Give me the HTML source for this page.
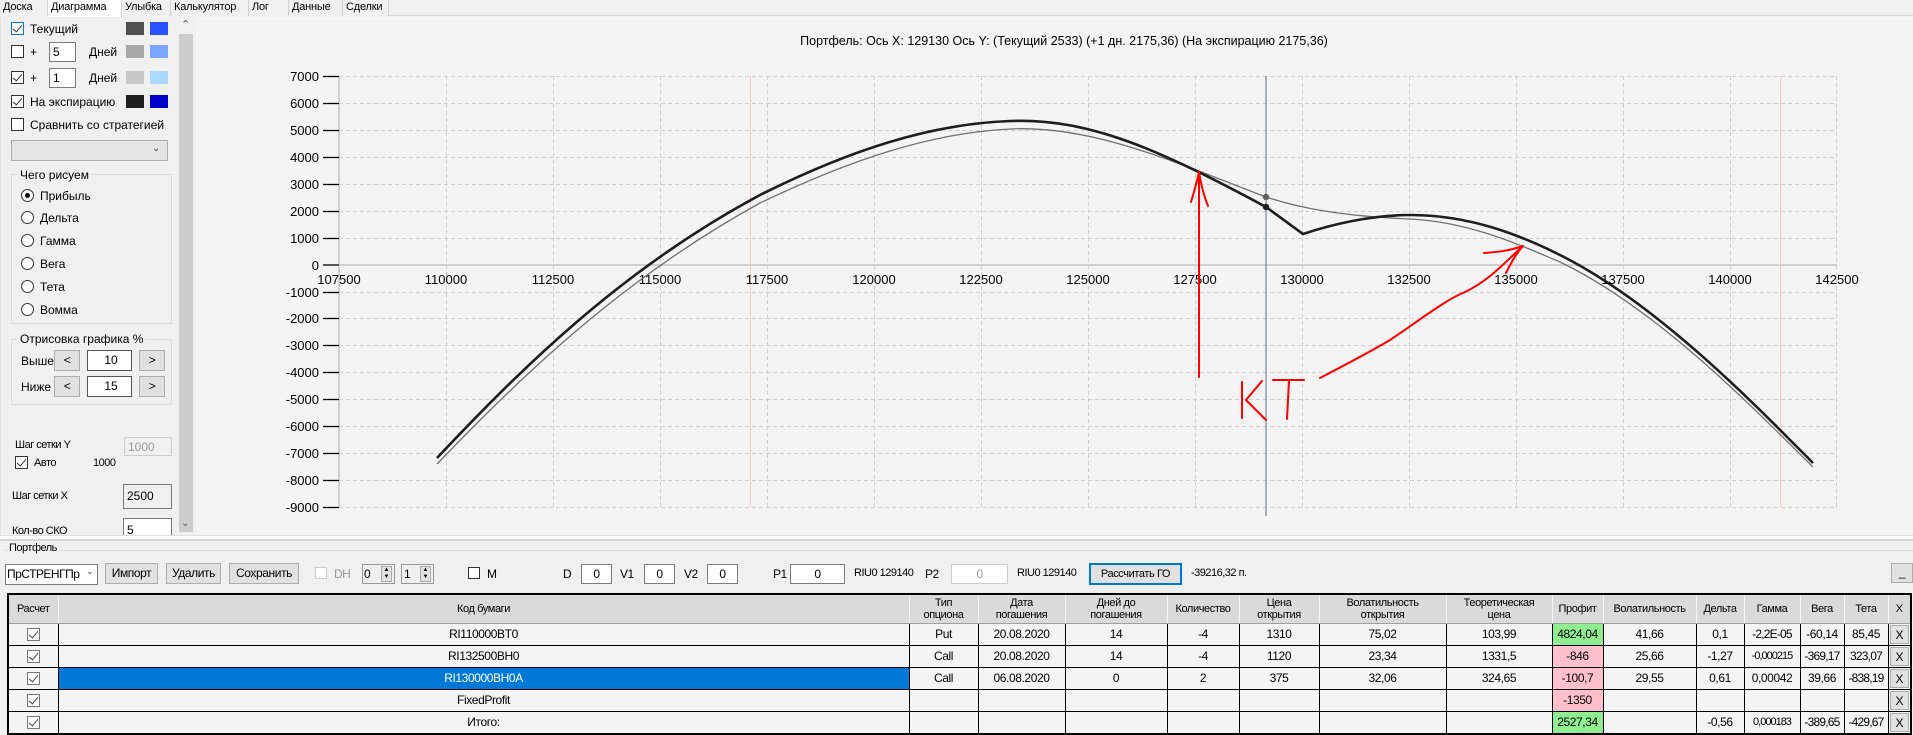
<!DOCTYPE html>
<html><head><meta charset="utf-8">
<style>
*{box-sizing:border-box;margin:0;padding:0}
body{width:1913px;height:734px;overflow:hidden;background:#f0f0f0;font-family:"Liberation Sans",sans-serif;font-size:12px;color:#000;position:relative}
.a{position:absolute;white-space:nowrap}
.tab{position:absolute;top:0;height:16px;line-height:15px;padding:0 3px;border-right:1px solid #d0d0d0;background:#f0f0f0;font-size:11px;overflow:hidden;white-space:nowrap;letter-spacing:-0.2px}
.cb{position:absolute;width:13px;height:13px;border:1px solid #333;background:#fff}
.cb.on::after{content:"";position:absolute;left:3px;top:0px;width:4px;height:8px;border:solid #333;border-width:0 1.5px 1.5px 0;transform:rotate(40deg)}
.sw{position:absolute;width:18px;height:13px}
.inp{position:absolute;background:#fff;border:1px solid #7a7a7a;padding-left:3px;line-height:18px;font-size:12px}
.rad{position:absolute;width:13px;height:13px;border:1px solid #333;border-radius:50%;background:#fff}
.grp{position:absolute;border:1px solid #dcdcdc}
.btn{position:absolute;background:#e1e1e1;border:1px solid #adadad;text-align:center;font-size:12px;letter-spacing:-0.4px;white-space:nowrap}
.n{font-size:12px;letter-spacing:-0.5px}
table{position:absolute;left:7px;top:593px;border-collapse:collapse;table-layout:fixed;width:1903px;font-size:12px;letter-spacing:-0.4px;border:2px solid #000}
th{background:#dadada;font-weight:normal;height:29px;line-height:12px;border-right:1px solid #f4f4f4;border-bottom:1px solid #a0a0a0;font-size:11px;overflow:hidden;white-space:nowrap}
td{height:22px;background:#f4f4f4;border:1px solid #000;text-align:center;padding:0;overflow:hidden;white-space:nowrap}
td.g{background:#90ee90}td.p{background:#ffc0cb}td.s{background:#0078d7;color:#fff}
.ck{display:inline-block;width:13px;height:13px;border:1px solid #777;background:#fff;position:relative;vertical-align:middle}
.ck::after{content:"";position:absolute;left:3px;top:0;width:4px;height:8px;border:solid #444;border-width:0 1px 1px 0;transform:rotate(40deg)}
.xb{display:block;margin:1px;height:19px;line-height:19px;background:#e1e1e1;border:1px solid #adadad;font-size:12px}
</style></head><body>
<div style="position:absolute;left:0;top:0;width:1913px;height:16px;background:#f0f0f0;border-bottom:1px solid #dadada"></div>
<div class="tab" style="left:0;width:48px">Доска</div>
<div class="tab" style="left:48px;width:74px;background:#fff;height:18px">Диаграмма</div>
<div class="tab" style="left:122px;width:49px">Улыбка</div>
<div class="tab" style="left:171px;width:78px">Калькулятор</div>
<div class="tab" style="left:249px;width:40px">Лог</div>
<div class="tab" style="left:289px;width:54px">Данные</div>
<div class="tab" style="left:343px;width:46px">Сделки</div>
<div style="position:absolute;left:196px;top:17px;width:1717px;height:518px;background:#f4f4f4"></div>
<div style="position:absolute;left:0;top:535px;width:1913px;height:6px;background:#f9f9f9;border-top:1px solid #e0e0e0;border-bottom:2px solid #d4d4d4"></div>
<div style="position:absolute;left:0;top:17px;width:178px;height:518px;background:#f0f0f0;border-left:1px solid #e0e0e0;overflow:hidden"></div>
<div style="position:absolute;left:178px;top:17px;width:16px;height:518px;background:#f0f0f0"></div>
<div style="position:absolute;left:179px;top:34px;width:14px;height:498px;background:#cdcdcd"></div>
<div class="a" style="left:181px;top:18px;font-size:11px;color:#555">&#8963;</div>
<div class="a" style="left:181px;top:518px;font-size:10px;color:#555">&#8964;</div>
<div class="cb on" style="left:11px;top:22px;border-color:#0078d7"></div><div class="a" style="left:30px;top:22px">Текущий</div>
<div class="sw" style="left:126px;top:22px;background:#505050"></div><div class="sw" style="left:150px;top:22px;background:#2b50ff"></div>
<div class="cb" style="left:11px;top:45px"></div><div class="a" style="left:30px;top:45px">+</div>
<div class="inp" style="left:49px;top:42px;width:27px;height:20px">5</div><div class="a" style="left:89px;top:45px">Дней</div>
<div class="sw" style="left:126px;top:45px;background:#a8a8a8"></div><div class="sw" style="left:150px;top:45px;background:#7aa6ff"></div>
<div class="cb on" style="left:11px;top:71px"></div><div class="a" style="left:30px;top:71px">+</div>
<div class="inp" style="left:49px;top:68px;width:27px;height:20px">1</div><div class="a" style="left:89px;top:71px">Дней</div>
<div class="sw" style="left:126px;top:71px;background:#c8c8c8"></div><div class="sw" style="left:150px;top:71px;background:#aad8ff"></div>
<div class="cb on" style="left:11px;top:95px"></div><div class="a" style="left:30px;top:95px">На экспирацию</div>
<div class="sw" style="left:126px;top:95px;background:#202020"></div><div class="sw" style="left:150px;top:95px;background:#0000c8"></div>
<div class="cb" style="left:11px;top:118px"></div><div class="a" style="left:30px;top:118px">Сравнить со стратегией</div>
<div style="position:absolute;left:11px;top:140px;width:157px;height:21px;background:#e5e5e5;border:1px solid #adadad"></div>
<div class="a" style="left:152px;top:143px;font-size:10px;color:#444">&#8964;</div>
<div class="grp" style="left:11px;top:174px;width:161px;height:150px"></div>
<div class="a" style="left:18px;top:168px;background:#f0f0f0;padding:0 2px">Чего рисуем</div>
<div class="rad" style="left:21px;top:189px"></div><div style="position:absolute;left:25px;top:193px;width:5px;height:5px;border-radius:50%;background:#000"></div><div class="a" style="left:40px;top:189px">Прибыль</div>
<div class="rad" style="left:21px;top:211px"></div><div class="a" style="left:40px;top:211px">Дельта</div>
<div class="rad" style="left:21px;top:234px"></div><div class="a" style="left:40px;top:234px">Гамма</div>
<div class="rad" style="left:21px;top:257px"></div><div class="a" style="left:40px;top:257px">Вега</div>
<div class="rad" style="left:21px;top:280px"></div><div class="a" style="left:40px;top:280px">Тета</div>
<div class="rad" style="left:21px;top:303px"></div><div class="a" style="left:40px;top:303px">Вомма</div>
<div class="grp" style="left:11px;top:339px;width:161px;height:66px"></div>
<div class="a" style="left:18px;top:332px;background:#f0f0f0;padding:0 2px">Отрисовка графика %</div>
<div class="a" style="left:21px;top:354px">Выше</div>
<div class="btn" style="left:54px;top:350px;width:26px;height:21px;line-height:19px">&lt;</div>
<div class="inp" style="left:87px;top:350px;width:45px;height:21px;text-align:center;border-color:#555">10</div>
<div class="btn" style="left:139px;top:350px;width:26px;height:21px;line-height:19px">&gt;</div>
<div class="a" style="left:21px;top:380px">Ниже</div>
<div class="btn" style="left:54px;top:376px;width:26px;height:21px;line-height:19px">&lt;</div>
<div class="inp" style="left:87px;top:376px;width:45px;height:21px;text-align:center;border-color:#555">15</div>
<div class="btn" style="left:139px;top:376px;width:26px;height:21px;line-height:19px">&gt;</div>
<div class="a n" style="left:15px;top:439px;font-size:11px">Шаг сетки Y</div>
<div class="inp" style="left:124px;top:437px;width:48px;height:19px;color:#999;border-color:#ccc;background:#f0f0f0">1000</div>
<div class="cb on" style="left:15px;top:456px"></div><div class="a n" style="left:34px;top:457px;font-size:11px">Авто</div><div class="a n" style="left:93px;top:457px;font-size:11px">1000</div>
<div class="a n" style="left:12px;top:490px;font-size:11px">Шаг сетки X</div>
<div class="inp" style="left:123px;top:484px;width:49px;height:25px;background:#f0f0f0;line-height:23px">2500</div>
<div class="a n" style="left:12px;top:525px;font-size:11px">Кол-во СКО</div>
<div class="inp" style="left:123px;top:518px;width:49px;height:17px;line-height:23px;overflow:hidden;border-bottom:none">5</div>
<svg class="a" style="left:0;top:0" width="1913" height="540" xmlns="http://www.w3.org/2000/svg" font-family="Liberation Sans, sans-serif" font-size="13">
<g stroke="#cfcfcf" stroke-width="1" stroke-dasharray="4,3">
<line x1="339" y1="76.5" x2="1837" y2="76.5"/><line x1="339" y1="103.5" x2="1837" y2="103.5"/><line x1="339" y1="130.5" x2="1837" y2="130.5"/><line x1="339" y1="157.5" x2="1837" y2="157.5"/><line x1="339" y1="184.5" x2="1837" y2="184.5"/><line x1="339" y1="211.5" x2="1837" y2="211.5"/><line x1="339" y1="238.5" x2="1837" y2="238.5"/>
<line x1="339" y1="292.5" x2="1837" y2="292.5"/><line x1="339" y1="318.5" x2="1837" y2="318.5"/><line x1="339" y1="345.5" x2="1837" y2="345.5"/><line x1="339" y1="372.5" x2="1837" y2="372.5"/><line x1="339" y1="399.5" x2="1837" y2="399.5"/><line x1="339" y1="426.5" x2="1837" y2="426.5"/><line x1="339" y1="453.5" x2="1837" y2="453.5"/><line x1="339" y1="480.5" x2="1837" y2="480.5"/><line x1="339" y1="507.5" x2="1837" y2="507.5"/>
<line x1="446.5" y1="76" x2="446.5" y2="507"/><line x1="553.5" y1="76" x2="553.5" y2="507"/><line x1="660.5" y1="76" x2="660.5" y2="507"/><line x1="767.5" y1="76" x2="767.5" y2="507"/><line x1="874.5" y1="76" x2="874.5" y2="507"/><line x1="981.5" y1="76" x2="981.5" y2="507"/><line x1="1088.5" y1="76" x2="1088.5" y2="507"/><line x1="1195.5" y1="76" x2="1195.5" y2="507"/><line x1="1302.5" y1="76" x2="1302.5" y2="507"/><line x1="1409.5" y1="76" x2="1409.5" y2="507"/><line x1="1516.5" y1="76" x2="1516.5" y2="507"/><line x1="1623.5" y1="76" x2="1623.5" y2="507"/><line x1="1730.5" y1="76" x2="1730.5" y2="507"/><line x1="1836.5" y1="76" x2="1836.5" y2="507"/>
</g>
<line x1="750.5" y1="76" x2="750.5" y2="507" stroke="#ffc8cc"/>
<line x1="1780.5" y1="76" x2="1780.5" y2="507" stroke="#ffc8cc"/>
<line x1="339" y1="76" x2="339" y2="508" stroke="#d0d0d0" stroke-width="2"/>
<line x1="339" y1="265" x2="1837" y2="265" stroke="#d0d0d0" stroke-width="2"/>
<g stroke="#000" stroke-width="1.3">
<line x1="323" y1="76.5" x2="339" y2="76.5"/><line x1="323" y1="103.5" x2="339" y2="103.5"/><line x1="323" y1="130.5" x2="339" y2="130.5"/><line x1="323" y1="157.5" x2="339" y2="157.5"/><line x1="323" y1="184.5" x2="339" y2="184.5"/><line x1="323" y1="211.5" x2="339" y2="211.5"/><line x1="323" y1="238.5" x2="339" y2="238.5"/><line x1="323" y1="265" x2="339" y2="265"/><line x1="323" y1="292.5" x2="339" y2="292.5"/><line x1="323" y1="318.5" x2="339" y2="318.5"/><line x1="323" y1="345.5" x2="339" y2="345.5"/><line x1="323" y1="372.5" x2="339" y2="372.5"/><line x1="323" y1="399.5" x2="339" y2="399.5"/><line x1="323" y1="426.5" x2="339" y2="426.5"/><line x1="323" y1="453.5" x2="339" y2="453.5"/><line x1="323" y1="480.5" x2="339" y2="480.5"/><line x1="323" y1="507.5" x2="339" y2="507.5"/>
</g>
<g text-anchor="end" fill="#000">
<text x="319" y="81">7000</text><text x="319" y="108">6000</text><text x="319" y="135">5000</text><text x="319" y="162">4000</text><text x="319" y="189">3000</text><text x="319" y="216">2000</text><text x="319" y="243">1000</text><text x="319" y="270">0</text><text x="319" y="297">-1000</text><text x="319" y="323">-2000</text><text x="319" y="350">-3000</text><text x="319" y="377">-4000</text><text x="319" y="404">-5000</text><text x="319" y="431">-6000</text><text x="319" y="458">-7000</text><text x="319" y="485">-8000</text><text x="319" y="512">-9000</text>
</g>
<g text-anchor="middle" fill="#000">
<text x="339" y="284">107500</text><text x="446" y="284">110000</text><text x="553" y="284">112500</text><text x="660" y="284">115000</text><text x="767" y="284">117500</text><text x="874" y="284">120000</text><text x="981" y="284">122500</text><text x="1088" y="284">125000</text><text x="1195" y="284">127500</text><text x="1302" y="284">130000</text><text x="1409" y="284">132500</text><text x="1516" y="284">135000</text><text x="1623" y="284">137500</text><text x="1730" y="284">140000</text><text x="1837" y="284">142500</text>
</g>
<text x="1064" y="45" text-anchor="middle" font-size="12.5">Портфель: Ось X: 129130 Ось Y:  (Текущий 2533)  (+1 дн. 2175,36)  (На экспирацию 2175,36)</text>
<line x1="1266" y1="76" x2="1266" y2="516" stroke="#7a8290" stroke-width="1.2"/>
<path d="M437,464 C520,378 620,280 760,203 C850,160 930,133 1010,129 C1090,125 1170,160 1266,197 C1300,208 1340,216 1410,219 C1470,222 1520,245 1560,262 C1660,310 1760,415 1813,467" fill="none" stroke="#707070" stroke-width="1.3"/>
<path d="M437,458 C520,370 620,270 760,195 C850,150 930,124 1010,121 C1090,118 1160,150 1266,207 L1303,234 C1330,225 1370,215 1410,215 C1470,215 1520,235 1560,255 C1660,305 1760,410 1813,463" fill="none" stroke="#1e1e1e" stroke-width="2.6"/>
<circle cx="1266" cy="197" r="3.2" fill="#606060"/><circle cx="1266" cy="207" r="3.2" fill="#1e1e1e"/>
<g stroke="#ff0000" stroke-width="2" fill="none" stroke-linecap="round" stroke-linejoin="round">
<path d="M1199,377 L1199,172"/>
<path d="M1191,202 C1194,192 1197,182 1199,172 C1201,185 1204,196 1208,206"/>
<path d="M1242,382 L1242,418"/>
<path d="M1262,381 L1246,400 L1266,420"/>
<path d="M1273,380 L1304,380 M1289,381 L1287,419"/>
<path d="M1320,378 C1345,365 1370,352 1390,340 C1420,320 1445,300 1465,292 C1490,280 1505,262 1523,246"/>
<path d="M1484,253 C1495,252 1505,252 1523,246 C1515,255 1510,265 1506,273"/>
</g>
</svg>
<div style="position:absolute;left:4px;top:550px;width:1909px;height:1px;background:#dcdcdc"></div>
<div class="a n" style="left:7px;top:542px;background:#f0f0f0;padding:0 2px;font-size:11px">Портфель</div>
<div style="position:absolute;left:5px;top:564px;width:93px;height:21px;background:#fff;border:1px solid #7a7a7a"></div>
<div class="a n" style="left:7px;top:567px">ПрСТРЕНГПр</div><div class="a" style="left:86px;top:566px;font-size:9px;color:#444">&#8964;</div>
<div class="btn" style="left:105px;top:563px;width:53px;height:21px;line-height:19px">Импорт</div>
<div class="btn" style="left:166px;top:563px;width:55px;height:21px;line-height:19px">Удалить</div>
<div class="btn" style="left:229px;top:563px;width:70px;height:21px;line-height:19px">Сохранить</div>
<div style="position:absolute;left:315px;top:567px;width:12px;height:12px;border:1px solid #ccc;background:#fff"></div>
<div class="a n" style="left:334px;top:567px;color:#999">DH</div>
<div style="position:absolute;left:362px;top:564px;width:33px;height:20px;border:1px solid #999;background:#f0f0f0"></div><div class="a n" style="left:364px;top:567px">0</div>
<div style="position:absolute;left:381px;top:566px;width:11px;height:16px;background:#e1e1e1;border:1px solid #aaa;font-size:6px;line-height:7px;text-align:center">▲<br>▼</div>
<div style="position:absolute;left:401px;top:564px;width:33px;height:20px;border:1px solid #999;background:#f0f0f0"></div><div class="a n" style="left:404px;top:567px">1</div>
<div style="position:absolute;left:420px;top:566px;width:11px;height:16px;background:#e1e1e1;border:1px solid #aaa;font-size:6px;line-height:7px;text-align:center">▲<br>▼</div>
<div style="position:absolute;left:468px;top:567px;width:12px;height:12px;border:1px solid #333;background:#fff"></div><div class="a n" style="left:487px;top:567px">M</div>
<div class="a n" style="left:563px;top:567px">D</div><div class="inp n" style="left:581px;top:564px;width:31px;height:20px;text-align:center;padding:0">0</div>
<div class="a n" style="left:620px;top:567px">V1</div><div class="inp n" style="left:644px;top:564px;width:31px;height:20px;text-align:center;padding:0">0</div>
<div class="a n" style="left:684px;top:567px">V2</div><div class="inp n" style="left:707px;top:564px;width:31px;height:20px;text-align:center;padding:0">0</div>
<div class="a n" style="left:773px;top:567px">P1</div><div class="inp n" style="left:790px;top:564px;width:55px;height:20px;text-align:center;padding:0">0</div>
<div class="a n" style="left:854px;top:567px;font-size:11px">RIU0 129140</div>
<div class="a n" style="left:925px;top:567px">P2</div><div class="inp n" style="left:951px;top:564px;width:57px;height:20px;text-align:center;padding:0;color:#999;border-color:#ccc">0</div>
<div class="a n" style="left:1017px;top:567px;font-size:11px">RIU0 129140</div>
<div class="btn" style="left:1089px;top:563px;width:93px;height:22px;line-height:18px;border:2px solid #0078d7;font-size:11px">Рассчитать ГО</div>
<div class="a n" style="left:1191px;top:567px;font-size:11px">-39216,32 п.</div>
<div class="btn" style="left:1891px;top:563px;width:22px;height:20px;line-height:16px">_</div>
<table>
<colgroup><col style="width:50px"><col style="width:851px"><col style="width:69px"><col style="width:87px"><col style="width:102px"><col style="width:72px"><col style="width:80px"><col style="width:127px"><col style="width:106px"><col style="width:51px"><col style="width:93px"><col style="width:48px"><col style="width:56px"><col style="width:44px"><col style="width:44px"><col style="width:23px"></colgroup>
<tr><th>Расчет</th><th>Код бумаги</th><th>Тип<br>опциона</th><th>Дата<br>погашения</th><th>Дней до<br>погашения</th><th>Количество</th><th>Цена<br>открытия</th><th>Волатильность<br>открытия</th><th>Теоретическая<br>цена</th><th>Профит</th><th>Волатильность</th><th>Дельта</th><th>Гамма</th><th>Вега</th><th>Тета</th><th>X</th></tr>
<tr><td><span class="ck"></span></td><td>RI110000BT0</td><td>Put</td><td>20.08.2020</td><td>14</td><td>-4</td><td>1310</td><td>75,02</td><td>103,99</td><td class="g">4824,04</td><td>41,66</td><td>0,1</td><td style="letter-spacing:-0.8px">-2,2E-05</td><td>-60,14</td><td>85,45</td><td><span class="xb">X</span></td></tr>
<tr><td><span class="ck"></span></td><td>RI132500BH0</td><td>Call</td><td>20.08.2020</td><td>14</td><td>-4</td><td>1120</td><td>23,34</td><td>1331,5</td><td class="p">-846</td><td>25,66</td><td>-1,27</td><td style="letter-spacing:-1px;font-size:11px">-0,000215</td><td style="letter-spacing:-0.8px">-369,17</td><td style="letter-spacing:-0.8px">323,07</td><td><span class="xb">X</span></td></tr>
<tr><td><span class="ck"></span></td><td class="s">RI130000BH0A</td><td>Call</td><td>06.08.2020</td><td>0</td><td>2</td><td>375</td><td>32,06</td><td>324,65</td><td class="p">-100,7</td><td>29,55</td><td>0,61</td><td>0,00042</td><td>39,66</td><td style="letter-spacing:-0.8px">-838,19</td><td><span class="xb">X</span></td></tr>
<tr><td><span class="ck"></span></td><td>FixedProfit</td><td></td><td></td><td></td><td></td><td></td><td></td><td></td><td class="p">-1350</td><td></td><td></td><td></td><td></td><td></td><td><span class="xb">X</span></td></tr>
<tr><td><span class="ck"></span></td><td>Итого:</td><td></td><td></td><td></td><td></td><td></td><td></td><td></td><td class="g">2527,34</td><td></td><td>-0,56</td><td style="letter-spacing:-1px;font-size:11px">0,000183</td><td style="letter-spacing:-0.8px">-389,65</td><td style="letter-spacing:-0.8px">-429,67</td><td><span class="xb">X</span></td></tr>
</table>
</body></html>
